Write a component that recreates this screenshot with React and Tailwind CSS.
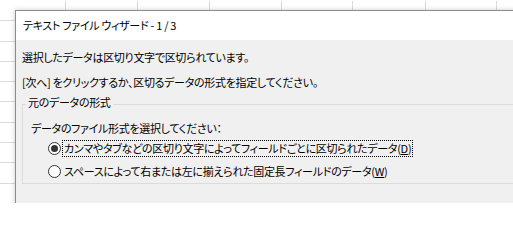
import React from "react";

const FONT = { fontFamily: '"Noto Sans CJK JP", "Noto Sans", sans-serif' };
const PALT = { fontFeatureSettings: '"palt"', letterSpacing: "-0.3px" };

// excel column widths behind the dialog
const COLS = [66, 72, 72, 72, 71, 73, 71, 30];

function SheetGrid() {
  return (
    <div className="absolute inset-0 flex flex-col pt-[1px]">
      {Array.from({ length: 11 }).map((_, r) => (
        <div key={r} className="flex h-[20.3px] shrink-0 border-b border-[#dadada]">
          {COLS.map((w, c) => (
            <div
              key={c}
              className="h-full shrink-0 border-r border-[#dadada]"
              style={{ width: w }}
            />
          ))}
        </div>
      ))}
    </div>
  );
}

function Radio({ checked }) {
  return (
    <span className="flex h-[13px] w-[13px] shrink-0 items-center justify-center rounded-full border border-[#333] bg-white">
      {checked && <span className="h-[7px] w-[7px] rounded-full bg-[#333]" />}
    </span>
  );
}

export default function App() {
  return (
    <div className="relative h-[203px] w-[513px] overflow-hidden bg-white text-black" style={FONT}>
      <SheetGrid />

      {/* wizard window */}
      <div className="absolute -bottom-[40px] -right-[40px] left-[15px] top-[10px] border border-[#8c8c8c] bg-[#f0f0f0] shadow-[0_0_5px_rgba(0,0,0,0.2)]">
        <div className="flex h-[29px] items-center bg-white pl-[7px] text-[11px] leading-none" style={PALT}>
          テキスト ファイル ウィザード - 1 / 3
        </div>

        <div className="pl-[6px] pt-[9px] text-[11px] leading-none" style={PALT}>
          <div className="flex h-[16px] items-center">選択したデータは区切り文字で区切られています。</div>
          <div className="mt-[9px] flex h-[16px] items-center">
            [次へ] をクリックするか、区切るデータの形式を指定してください。
          </div>

          {/* group box */}
          <div className="relative mt-[14px] h-[80px] w-[540px] border border-[#dcdcdc]">
            <span className="absolute -top-[8px] left-[3px] bg-[#f0f0f0] px-[2px]">元のデータの形式</span>
            <div className="pl-[8px] pt-[18px]">データのファイル形式を選択してください：</div>
            <div className="mt-[6px] flex items-center pl-[25px]">
              <Radio checked />
              <span className="ml-[1px] border border-dotted border-black px-[1px] py-[2px]">
                カンマやタブなどの区切り文字によってフィールドごとに区切られたデータ(<u>D</u>)
              </span>
            </div>
            <div className="mt-[6px] flex items-center pl-[25px]">
              <Radio />
              <span className="ml-[1px] border border-transparent px-[1px] py-[2px]">
                スペースによって右または左に揃えられた固定長フィールドのデータ(<u>W</u>)
              </span>
            </div>
          </div>
        </div>
      </div>
    </div>
  );
}
